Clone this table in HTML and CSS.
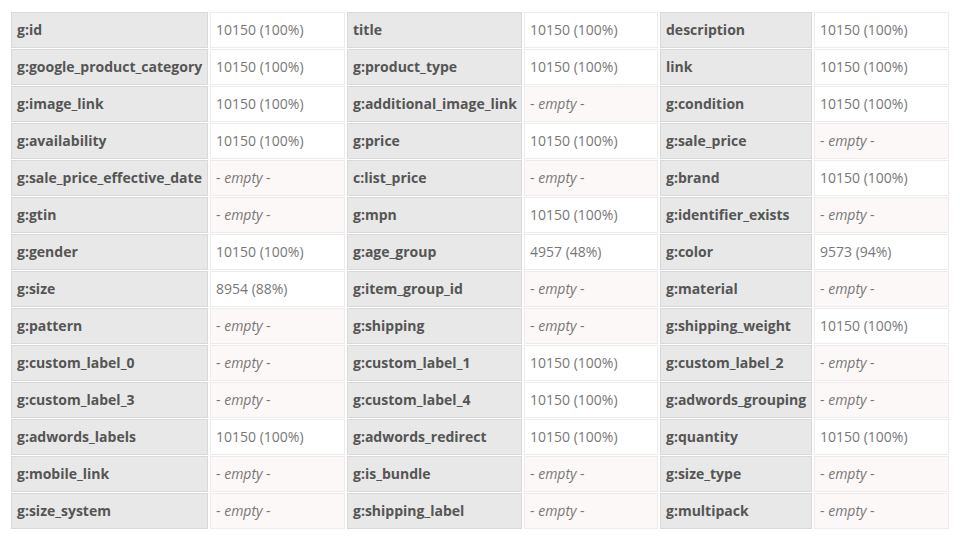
FILE: index.html
```html
<!DOCTYPE html>
<html>
<head>
<meta charset="utf-8">
<link rel="stylesheet" href="styles.css">
</head>
<body>
<div class="grid">
  <div class="k">g:id</div><div class="v">10150 (100%)</div>
  <div class="k">title</div><div class="v">10150 (100%)</div>
  <div class="k">description</div><div class="v">10150 (100%)</div>

  <div class="k">g:google_product_category</div><div class="v">10150 (100%)</div>
  <div class="k">g:product_type</div><div class="v">10150 (100%)</div>
  <div class="k">link</div><div class="v">10150 (100%)</div>

  <div class="k">g:image_link</div><div class="v">10150 (100%)</div>
  <div class="k">g:additional_image_link</div><div class="v e">- <i>empty</i> -</div>
  <div class="k">g:condition</div><div class="v">10150 (100%)</div>

  <div class="k">g:availability</div><div class="v">10150 (100%)</div>
  <div class="k">g:price</div><div class="v">10150 (100%)</div>
  <div class="k">g:sale_price</div><div class="v e">- <i>empty</i> -</div>

  <div class="k">g:sale_price_effective_date</div><div class="v e">- <i>empty</i> -</div>
  <div class="k">c:list_price</div><div class="v e">- <i>empty</i> -</div>
  <div class="k">g:brand</div><div class="v">10150 (100%)</div>

  <div class="k">g:gtin</div><div class="v e">- <i>empty</i> -</div>
  <div class="k">g:mpn</div><div class="v">10150 (100%)</div>
  <div class="k">g:identifier_exists</div><div class="v e">- <i>empty</i> -</div>

  <div class="k">g:gender</div><div class="v">10150 (100%)</div>
  <div class="k">g:age_group</div><div class="v">4957 (48%)</div>
  <div class="k">g:color</div><div class="v">9573 (94%)</div>

  <div class="k">g:size</div><div class="v">8954 (88%)</div>
  <div class="k">g:item_group_id</div><div class="v e">- <i>empty</i> -</div>
  <div class="k">g:material</div><div class="v e">- <i>empty</i> -</div>

  <div class="k">g:pattern</div><div class="v e">- <i>empty</i> -</div>
  <div class="k">g:shipping</div><div class="v e">- <i>empty</i> -</div>
  <div class="k">g:shipping_weight</div><div class="v">10150 (100%)</div>

  <div class="k">g:custom_label_0</div><div class="v e">- <i>empty</i> -</div>
  <div class="k">g:custom_label_1</div><div class="v">10150 (100%)</div>
  <div class="k">g:custom_label_2</div><div class="v e">- <i>empty</i> -</div>

  <div class="k">g:custom_label_3</div><div class="v e">- <i>empty</i> -</div>
  <div class="k">g:custom_label_4</div><div class="v">10150 (100%)</div>
  <div class="k">g:adwords_grouping</div><div class="v e">- <i>empty</i> -</div>

  <div class="k">g:adwords_labels</div><div class="v">10150 (100%)</div>
  <div class="k">g:adwords_redirect</div><div class="v">10150 (100%)</div>
  <div class="k">g:quantity</div><div class="v">10150 (100%)</div>

  <div class="k">g:mobile_link</div><div class="v e">- <i>empty</i> -</div>
  <div class="k">g:is_bundle</div><div class="v e">- <i>empty</i> -</div>
  <div class="k">g:size_type</div><div class="v e">- <i>empty</i> -</div>

  <div class="k">g:size_system</div><div class="v e">- <i>empty</i> -</div>
  <div class="k">g:shipping_label</div><div class="v e">- <i>empty</i> -</div>
  <div class="k">g:multipack</div><div class="v e">- <i>empty</i> -</div>
</div>
</body>
</html>
```
FILE: styles.css
```css
html, body {
  margin: 0;
  padding: 0;
  background: #fff;
}
body {
  font-family: "Open Sans", "Liberation Sans", sans-serif;
}
.grid {
  display: grid;
  grid-template-columns: 197px 135px 175px 134px 152px 135px;
  grid-auto-rows: 36px;
  column-gap: 2px;
  row-gap: 1px;
  margin: 12px 0 0 11px;
}
.k, .v {
  box-sizing: border-box;
  display: flex;
  align-items: center;
  padding: 0 0 2px 5px;
  white-space: nowrap;
  overflow: hidden;
}
.k {
  background: #e8e8e8;
  border: 1px solid #d9d9d9;
  color: #555;
  font-weight: 700;
  font-size: 14px;
}
.v {
  background: #fff;
  border: 1px solid #ececec;
  color: #777;
  font-size: 14px;
}
.v.e {
  background: #fcf8f7;
  border-color: #f0ebea;
  white-space: pre;
}
.v.e i {
  font-style: italic;
}
```
